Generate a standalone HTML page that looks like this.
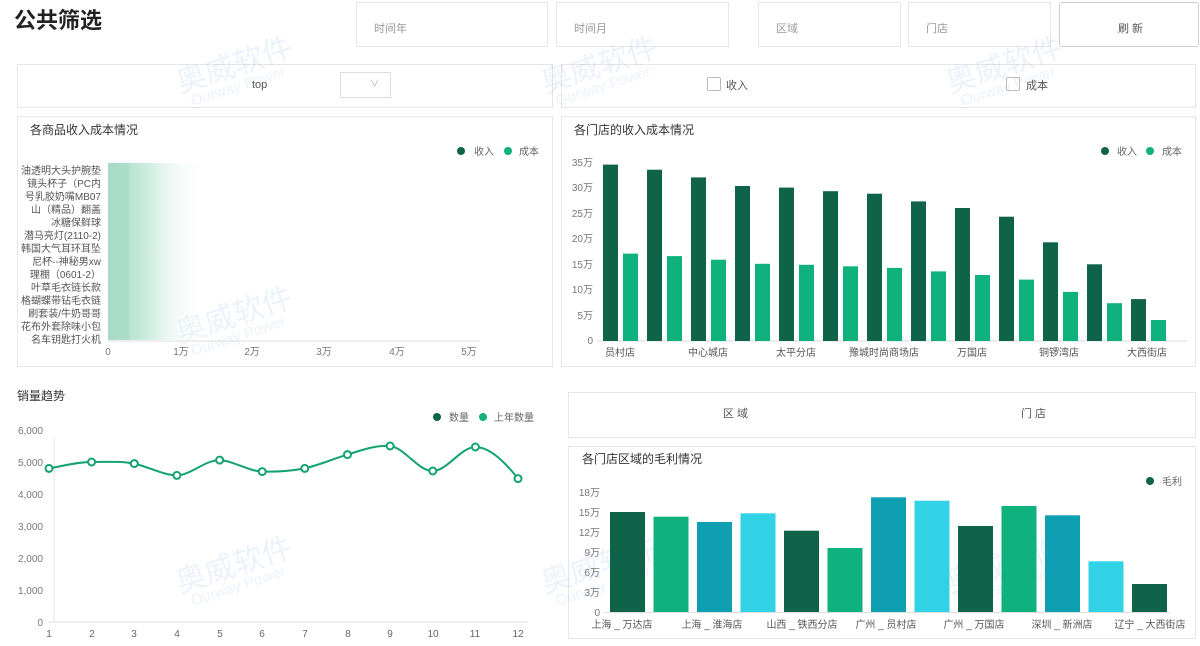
<!DOCTYPE html>
<html><head><meta charset="utf-8">
<style>
*{margin:0;padding:0;box-sizing:border-box}
body{width:1200px;height:646px;background:#fff;position:relative;overflow:hidden;font-family:"Liberation Sans","Noto Sans CJK SC",sans-serif;color:#333}
.a{position:absolute}
.box{position:absolute;border:1px solid #e6e6e6;background:#fff}
.fl{font-size:11px;color:#999;position:absolute}
.t{position:absolute;font-size:12px;color:#333}
.wm{position:absolute;color:rgba(150,185,225,.18);font-size:30px;transform:rotate(-18deg);white-space:nowrap}
.wm span{display:block;font-size:15px;margin-left:8px;margin-top:-6px}
</style></head><body>
<div class="a" style="left:14px;top:3px;font-size:22px;font-weight:bold;color:#222">公共筛选</div>
<div class="box" style="left:356px;top:2px;width:192px;height:45px"><div class="fl" style="left:17px;top:17px">时间年</div></div>
<div class="box" style="left:556px;top:2px;width:173px;height:45px"><div class="fl" style="left:17px;top:17px">时间月</div></div>
<div class="box" style="left:758px;top:2px;width:143px;height:45px"><div class="fl" style="left:17px;top:17px">区域</div></div>
<div class="box" style="left:908px;top:2px;width:143px;height:45px"><div class="fl" style="left:17px;top:17px">门店</div></div>
<div class="box" style="left:1059px;top:2px;width:140px;height:45px;border-color:#d0d0d0;border-radius:3px"><div class="fl" style="left:58px;top:17px;color:#555">刷 新</div></div>

<div class="box" style="left:17px;top:64px;width:536px;height:44px"><div class="fl" style="left:234px;top:14px;color:#555">top</div>
<div class="box" style="left:322px;top:7px;width:51px;height:26px;border-color:#ddd"><div class="fl" style="left:29px;top:4px;font-size:9px;color:#aaa">∨</div></div></div>
<div class="box" style="left:561px;top:64px;width:635px;height:44px">
<div class="box" style="left:145px;top:12px;width:14px;height:14px;border-color:#bbb;border-radius:2px"></div><div class="fl" style="left:164px;top:12px;color:#555">收入</div>
<div class="box" style="left:444px;top:12px;width:14px;height:14px;border-color:#bbb;border-radius:2px"></div><div class="fl" style="left:464px;top:12px;color:#555">成本</div></div>

<div class="box" style="left:17px;top:116px;width:536px;height:251px"></div>
<div class="box" style="left:561px;top:116px;width:635px;height:251px"></div>
<div class="box" style="left:568px;top:392px;width:628px;height:46px"><div class="fl" style="left:154px;top:12px;color:#555">区 域</div><div class="fl" style="left:452px;top:12px;color:#555">门 店</div></div>
<div class="box" style="left:568px;top:446px;width:628px;height:193px"></div>

<div class="wm" style="left:175px;top:40px">奥威软件<span>Ourway Power</span></div>
<div class="wm" style="left:540px;top:40px">奥威软件<span>Ourway Power</span></div>
<div class="wm" style="left:945px;top:40px">奥威软件<span>Ourway Power</span></div>
<div class="wm" style="left:175px;top:290px">奥威软件<span>Ourway Power</span></div>
<div class="wm" style="left:175px;top:540px">奥威软件<span>Ourway Power</span></div>
<div class="wm" style="left:540px;top:540px">奥威软件<span>Ourway Power</span></div>
<div class="wm" style="left:945px;top:540px">奥威软件<span>Ourway Power</span></div>

<svg class="a" style="left:0;top:0" width="1200" height="646" font-family="Liberation Sans,Noto Sans CJK SC,sans-serif">
<defs><linearGradient id="g1" x1="0" x2="1"><stop offset="0" stop-color="#9fd8c2"/><stop offset=".35" stop-color="#c8eadb"/><stop offset="1" stop-color="#fff" stop-opacity="0"/></linearGradient></defs>
<g font-size="12" fill="#333"><text x="30" y="134">各商品收入成本情况</text><text x="574" y="134">各门店的收入成本情况</text><text x="17" y="400">销量趋势</text><text x="582" y="463">各门店区域的毛利情况</text></g>
<g font-size="10" fill="#666">
<circle cx="461" cy="151" r="4" fill="#0e6349"/><text x="474" y="155">收入</text><circle cx="508" cy="151" r="4" fill="#0fb27c"/><text x="519" y="155">成本</text>
<circle cx="1105" cy="151" r="4" fill="#0e6349"/><text x="1117" y="155">收入</text><circle cx="1150" cy="151" r="4" fill="#0fb27c"/><text x="1162" y="155">成本</text>
<circle cx="437" cy="417" r="4" fill="#0e6349"/><text x="449" y="421">数量</text><circle cx="483" cy="417" r="4" fill="#0fb27c"/><text x="494" y="421">上年数量</text>
<circle cx="1150" cy="481" r="4" fill="#0e6349"/><text x="1162" y="485">毛利</text>
</g>
<!-- chart1 -->
<rect x="108" y="163" width="100" height="177" fill="url(#g1)"/>
<rect x="108" y="163" width="22" height="177" fill="#a9dcc8" opacity=".7"/>
<line x1="108" y1="341" x2="480" y2="341" stroke="#ddd"/>
<g font-size="10" fill="#555" text-anchor="end">
<text x="101" y="174">油透明大头护腕垫</text><text x="101" y="187">镜头杯子（PC内</text><text x="101" y="200">号乳胶奶嘴MB07</text><text x="101" y="213">山（精品）翻盖</text><text x="101" y="226">冰糖保鲜球</text><text x="101" y="239">潜马亮灯(2110-2)</text><text x="101" y="252">韩国大气耳环耳坠</text><text x="101" y="265">尼杯--神秘男xw</text><text x="101" y="278">理棚（0601-2）</text><text x="101" y="291">叶草毛衣链长款</text><text x="101" y="304">格蝴蝶带钻毛衣链</text><text x="101" y="317">刷套装/牛奶哥哥</text><text x="101" y="330">花布外套除味小包</text><text x="101" y="343">名车钥匙打火机</text>
</g>
<g font-size="10" fill="#777" text-anchor="middle"><text x="108" y="355">0</text><text x="181" y="355">1万</text><text x="252" y="355">2万</text><text x="324" y="355">3万</text><text x="397" y="355">4万</text><text x="469" y="355">5万</text></g>
<!-- chart2 -->
<g font-size="10" fill="#777" text-anchor="end"><text x="593" y="166">35万</text><text x="593" y="191">30万</text><text x="593" y="217">25万</text><text x="593" y="242">20万</text><text x="593" y="268">15万</text><text x="593" y="293">10万</text><text x="593" y="319">5万</text><text x="593" y="344">0</text></g>
<line x1="597" y1="341" x2="1187" y2="341" stroke="#ddd"/>
<g fill="#0e6349">
<rect x="603" y="164.6" width="15" height="176.4"/><rect x="647" y="169.7" width="15" height="171.3"/><rect x="691" y="177.4" width="15" height="163.6"/><rect x="735" y="186" width="15" height="155"/><rect x="779" y="187.6" width="15" height="153.4"/><rect x="823" y="191.2" width="15" height="149.8"/><rect x="867" y="193.7" width="15" height="147.3"/><rect x="911" y="201.4" width="15" height="139.6"/><rect x="955" y="208" width="15" height="133"/><rect x="999" y="216.7" width="15" height="124.3"/><rect x="1043" y="242.3" width="15" height="98.7"/><rect x="1087" y="264.3" width="15" height="76.7"/><rect x="1131" y="299.1" width="15" height="41.9"/></g>
<g fill="#0fb27c">
<rect x="623" y="253.6" width="15" height="87.4"/><rect x="667" y="256.1" width="15" height="84.9"/><rect x="711" y="259.7" width="15" height="81.3"/><rect x="755" y="263.8" width="15" height="77.2"/><rect x="799" y="264.8" width="15" height="76.2"/><rect x="843" y="266.3" width="15" height="74.7"/><rect x="887" y="267.9" width="15" height="73.1"/><rect x="931" y="271.4" width="15" height="69.6"/><rect x="975" y="275" width="15" height="66"/><rect x="1019" y="279.6" width="15" height="61.4"/><rect x="1063" y="291.9" width="15" height="49.1"/><rect x="1107" y="303.2" width="15" height="37.8"/><rect x="1151" y="320" width="15" height="21"/></g>
<g font-size="10" fill="#555" text-anchor="middle"><text x="620" y="356">员村店</text><text x="708" y="356">中心城店</text><text x="796" y="356">太平分店</text><text x="884" y="356">豫城时尚商场店</text><text x="972" y="356">万国店</text><text x="1059" y="356">铜锣湾店</text><text x="1147" y="356">大西街店</text></g>
<!-- line chart -->
<g font-size="10" fill="#777" text-anchor="end"><text x="43" y="434">6,000</text><text x="43" y="466">5,000</text><text x="43" y="498">4,000</text><text x="43" y="530">3,000</text><text x="43" y="562">2,000</text><text x="43" y="594">1,000</text><text x="43" y="626">0</text></g>
<line x1="54" y1="438" x2="54" y2="622" stroke="#e4e4e4"/>
<line x1="49" y1="622" x2="528" y2="622" stroke="#ddd"/>
<g font-size="10" fill="#666" text-anchor="middle"><text x="49" y="637">1</text><text x="92" y="637">2</text><text x="134" y="637">3</text><text x="177" y="637">4</text><text x="220" y="637">5</text><text x="262" y="637">6</text><text x="305" y="637">7</text><text x="348" y="637">8</text><text x="390" y="637">9</text><text x="433" y="637">10</text><text x="475" y="637">11</text><text x="518" y="637">12</text></g>
<path d="M49,468.4 C63,466 77,462 91.6,462 C106,462 120,461 134.3,463.6 C149,467 163,475 176.9,475.4 C191,475 205,460 219.6,460.1 C234,461 248,471 262.2,471.6 C277,472 291,471 304.8,468.4 C319,465 333,459 347.5,454.6 C362,450 376,445 390.1,446 C405,448 418,471 432.8,471 C447,471 461,447 475.4,447 C490,447 505,462 518,478.6" fill="none" stroke="#13a36f" stroke-width="2"/>
<g fill="#fff" stroke="#13a36f" stroke-width="2"><circle cx="49" cy="468.4" r="3.5"/><circle cx="91.6" cy="462" r="3.5"/><circle cx="134.3" cy="463.6" r="3.5"/><circle cx="176.9" cy="475.4" r="3.5"/><circle cx="219.6" cy="460.1" r="3.5"/><circle cx="262.2" cy="471.6" r="3.5"/><circle cx="304.8" cy="468.4" r="3.5"/><circle cx="347.5" cy="454.6" r="3.5"/><circle cx="390.1" cy="446" r="3.5"/><circle cx="432.8" cy="471" r="3.5"/><circle cx="475.4" cy="447" r="3.5"/><circle cx="518" cy="478.6" r="3.5"/></g>
<!-- chart3 -->
<g font-size="10" fill="#777" text-anchor="end"><text x="600" y="496">18万</text><text x="600" y="516">15万</text><text x="600" y="536">12万</text><text x="600" y="556">9万</text><text x="600" y="576">6万</text><text x="600" y="596">3万</text><text x="600" y="616">0</text></g>
<line x1="605" y1="612.5" x2="1170" y2="612.5" stroke="#ddd"/>
<rect x="610" y="512" width="35" height="100" fill="#0e6349"/><rect x="653.5" y="516.7" width="35" height="95.3" fill="#0fb27c"/><rect x="697" y="522" width="35" height="90" fill="#0e9fb3"/><rect x="740.5" y="513.3" width="35" height="98.7" fill="#31d2e6"/>
<rect x="784" y="530.7" width="35" height="81.3" fill="#0e6349"/><rect x="827.5" y="548" width="35" height="64" fill="#0fb27c"/><rect x="871" y="497.3" width="35" height="114.7" fill="#0e9fb3"/><rect x="914.5" y="500.7" width="35" height="111.3" fill="#31d2e6"/>
<rect x="958" y="526" width="35" height="86" fill="#0e6349"/><rect x="1001.5" y="506" width="35" height="106" fill="#0fb27c"/><rect x="1045" y="515.3" width="35" height="96.7" fill="#0e9fb3"/><rect x="1088.5" y="561.3" width="35" height="50.7" fill="#31d2e6"/><rect x="1132" y="584" width="35" height="28" fill="#0e6349"/>
<g font-size="10" fill="#555" text-anchor="middle"><text x="622" y="628">上海 _ 万达店</text><text x="712" y="628">上海 _ 淮海店</text><text x="802" y="628">山西 _ 铁西分店</text><text x="886" y="628">广州 _ 员村店</text><text x="974" y="628">广州 _ 万国店</text><text x="1062" y="628">深圳 _ 新洲店</text><text x="1150" y="628">辽宁 _ 大西街店</text></g>
</svg>
</body></html>
